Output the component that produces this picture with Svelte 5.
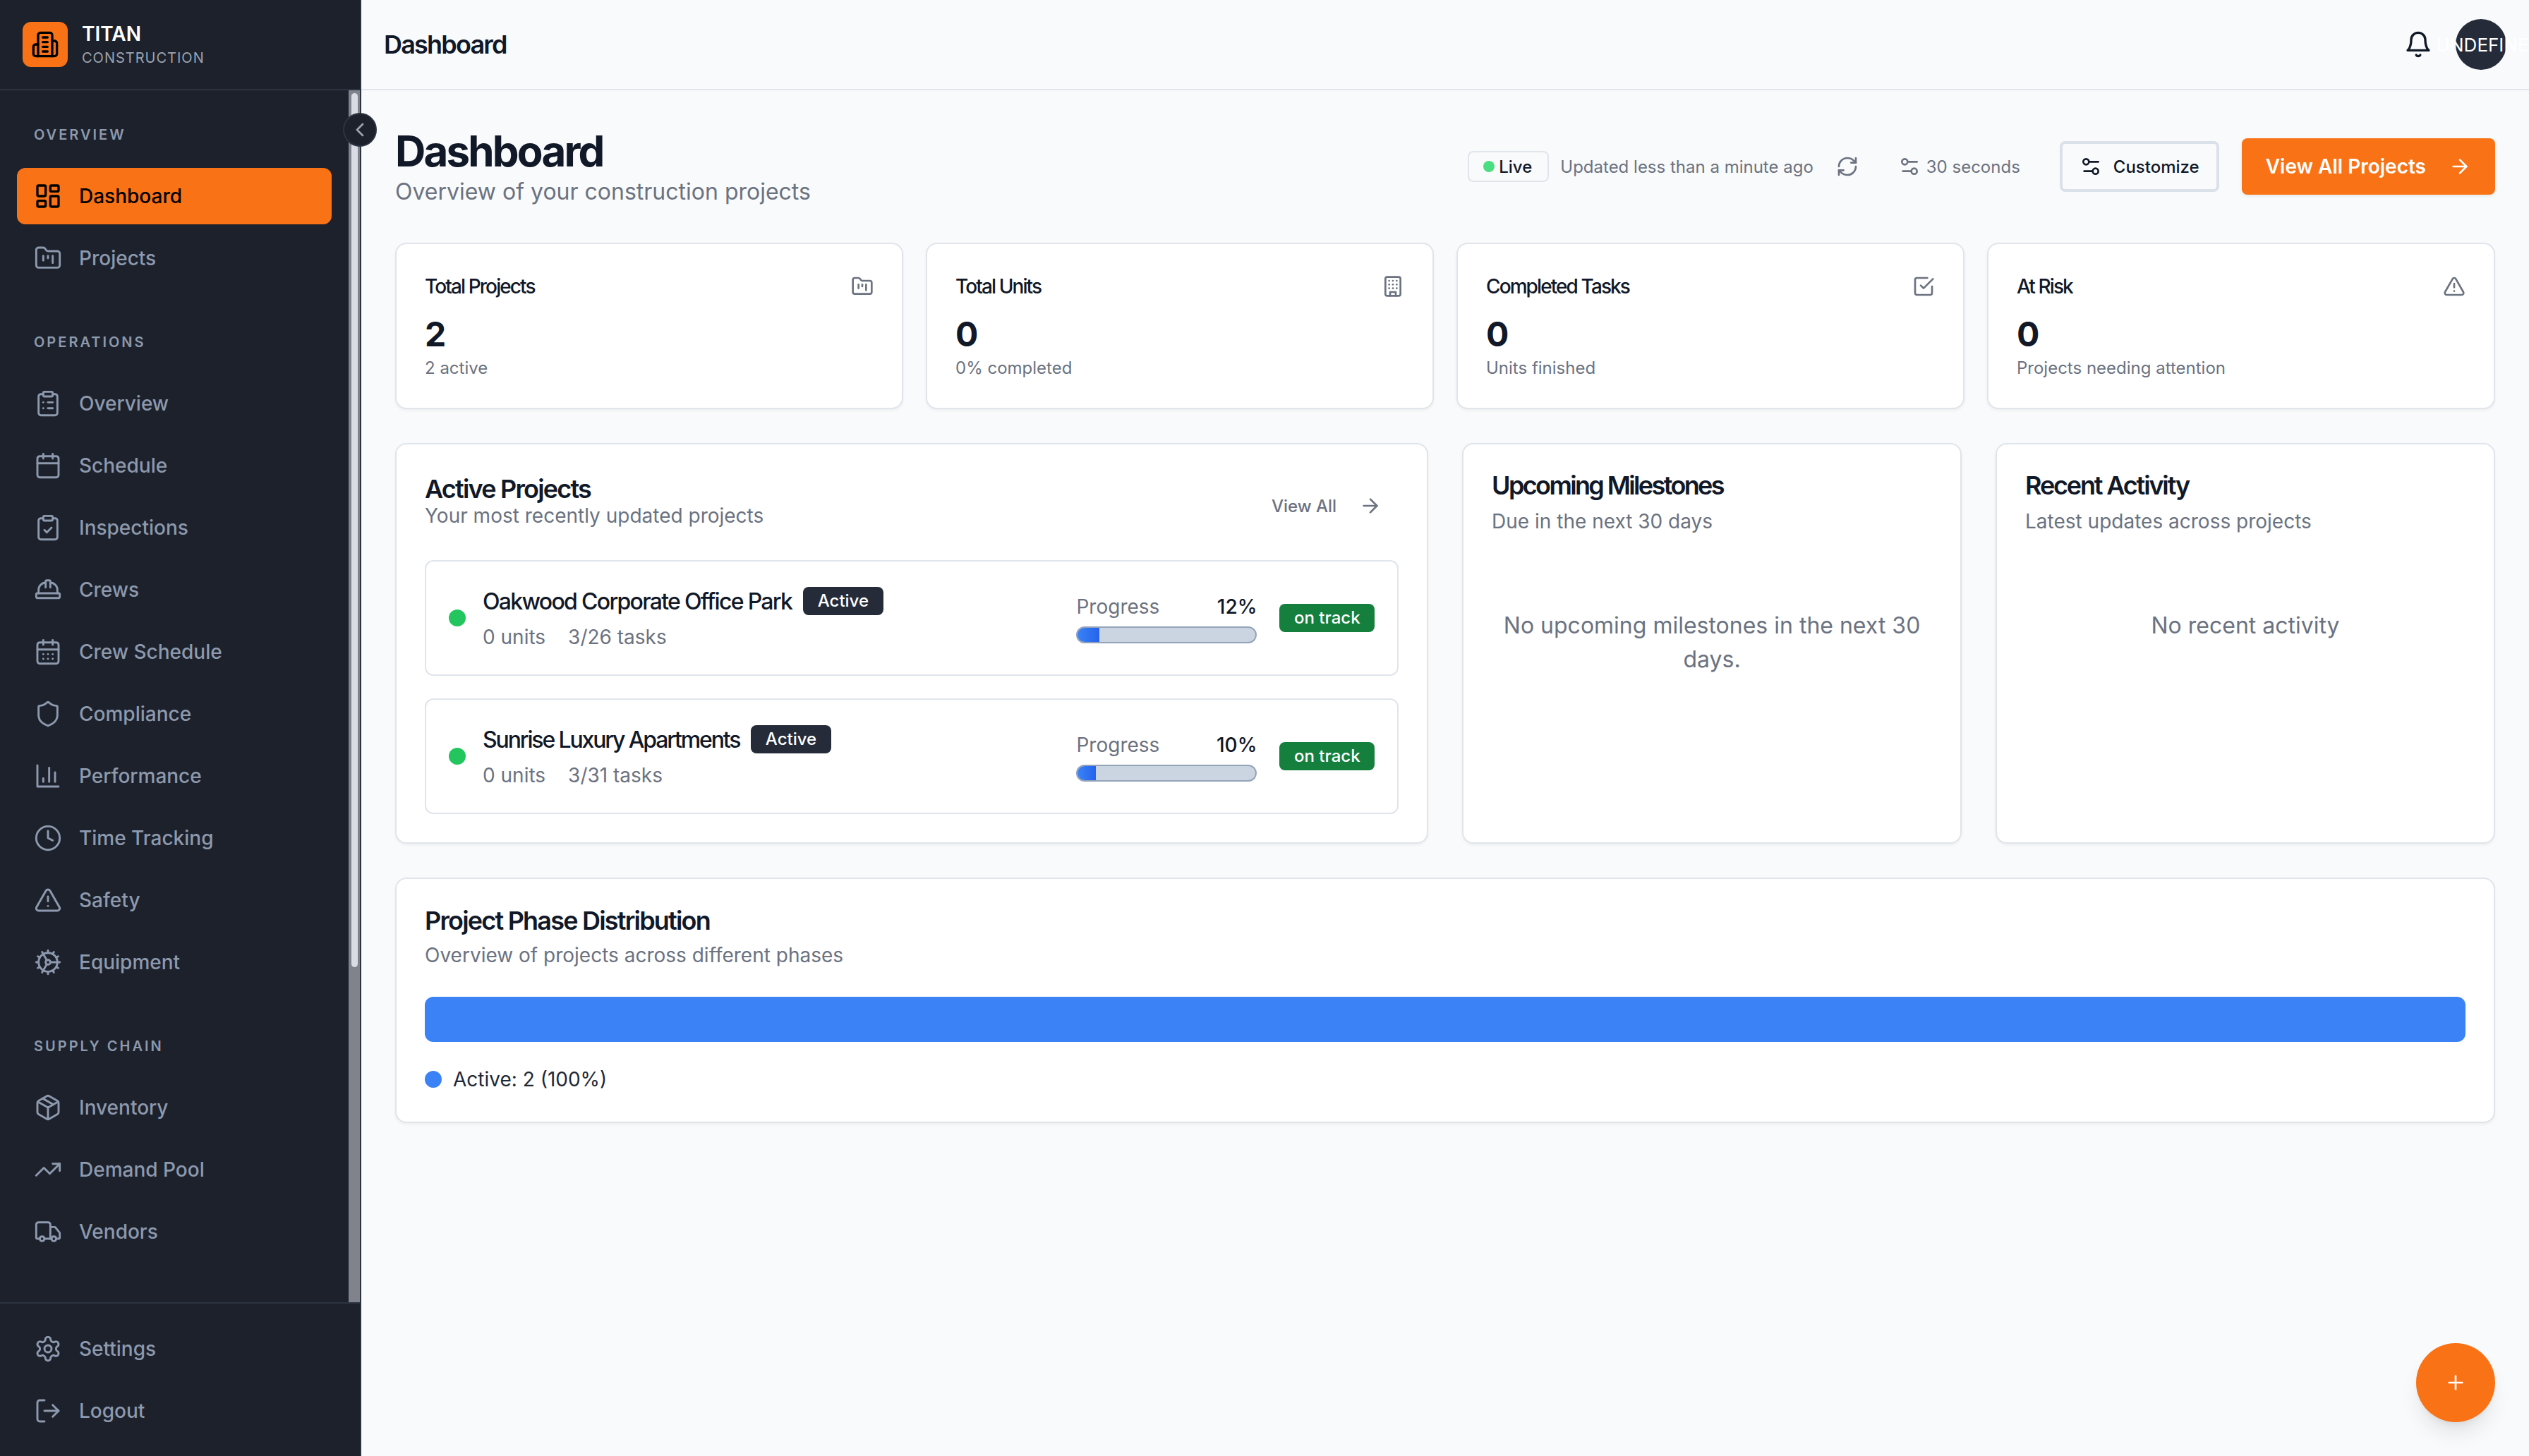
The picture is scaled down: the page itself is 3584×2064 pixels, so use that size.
<script>
  const paths = {
    building2: '<path d="M6 22V4a2 2 0 0 1 2-2h8a2 2 0 0 1 2 2v18Z"/><path d="M6 12H4a2 2 0 0 0-2 2v6a2 2 0 0 0 2 2h2"/><path d="M18 9h2a2 2 0 0 1 2 2v9a2 2 0 0 1-2 2h-2"/><path d="M10 6h4"/><path d="M10 10h4"/><path d="M10 14h4"/><path d="M10 18h4"/>',
    dashboard: '<rect width="7" height="9" x="3" y="3" rx="1"/><rect width="7" height="5" x="14" y="3" rx="1"/><rect width="7" height="9" x="14" y="12" rx="1"/><rect width="7" height="5" x="3" y="16" rx="1"/>',
    folder: '<path d="M4 20h16a2 2 0 0 0 2-2V8a2 2 0 0 0-2-2h-7.93a2 2 0 0 1-1.66-.9l-.82-1.2A2 2 0 0 0 7.93 3H4a2 2 0 0 0-2 2v13c0 1.1.9 2 2 2Z"/><path d="M8 10v4"/><path d="M12 10v2"/><path d="M16 10v6"/>',
    clipboardList: '<rect width="8" height="4" x="8" y="2" rx="1" ry="1"/><path d="M16 4h2a2 2 0 0 1 2 2v14a2 2 0 0 1-2 2H6a2 2 0 0 1-2-2V6a2 2 0 0 1 2-2h2"/><path d="M12 11h4"/><path d="M12 16h4"/><path d="M8 11h.01"/><path d="M8 16h.01"/>',
    calendar: '<path d="M8 2v4"/><path d="M16 2v4"/><rect width="18" height="18" x="3" y="4" rx="2"/><path d="M3 10h18"/>',
    clipboardCheck: '<rect width="8" height="4" x="8" y="2" rx="1" ry="1"/><path d="M16 4h2a2 2 0 0 1 2 2v14a2 2 0 0 1-2 2H6a2 2 0 0 1-2-2V6a2 2 0 0 1 2-2h2"/><path d="m9 14 2 2 4-4"/>',
    hardHat: '<path d="M2 18a1 1 0 0 0 1 1h18a1 1 0 0 0 1-1v-2a1 1 0 0 0-1-1H3a1 1 0 0 0-1 1v2z"/><path d="M10 10V5a1 1 0 0 1 1-1h2a1 1 0 0 1 1 1v5"/><path d="M4 15v-3a6 6 0 0 1 6-6"/><path d="M14 6a6 6 0 0 1 6 6v3"/>',
    calendarDays: '<path d="M8 2v4"/><path d="M16 2v4"/><rect width="18" height="18" x="3" y="4" rx="2"/><path d="M3 10h18"/><path d="M8 14h.01"/><path d="M12 14h.01"/><path d="M16 14h.01"/><path d="M8 18h.01"/><path d="M12 18h.01"/><path d="M16 18h.01"/>',
    shield: '<path d="M20 13c0 5-3.5 7.5-7.66 8.95a1 1 0 0 1-.67-.01C7.5 20.5 4 18 4 13V6a1 1 0 0 1 1-1c2 0 4.5-1.2 6.24-2.72a1.17 1.17 0 0 1 1.52 0C14.51 3.81 17 5 19 5a1 1 0 0 1 1 1z"/>',
    chart: '<path d="M3 3v18h18"/><path d="M18 17V9"/><path d="M13 17V5"/><path d="M8 17v-3"/>',
    clock: '<circle cx="12" cy="12" r="10"/><polyline points="12 6 12 12 16 14"/>',
    alert: '<path d="m21.73 18-8-14a2 2 0 0 0-3.48 0l-8 14A2 2 0 0 0 4 21h16a2 2 0 0 0 1.73-3"/><path d="M12 9v4"/><path d="M12 17h.01"/>',
    cog: '<path d="M12 20a8 8 0 1 0 0-16 8 8 0 0 0 0 16Z"/><path d="M12 14a2 2 0 1 0 0-4 2 2 0 0 0 0 4Z"/><path d="M12 2v2"/><path d="M12 22v-2"/><path d="m17 20.66-1-1.73"/><path d="M11 10.27 7 3.34"/><path d="m20.66 17-1.73-1"/><path d="m3.34 7 1.73 1"/><path d="M14 12h8"/><path d="M2 12h2"/><path d="m20.66 7-1.73 1"/><path d="m3.34 17 1.73-1"/><path d="m17 3.34-1 1.73"/><path d="m11 13.73-4 6.93"/>',
    package: '<path d="m7.5 4.27 9 5.15"/><path d="M21 8a2 2 0 0 0-1-1.73l-7-4a2 2 0 0 0-2 0l-7 4A2 2 0 0 0 3 8v8a2 2 0 0 0 1 1.73l7 4a2 2 0 0 0 2 0l7-4A2 2 0 0 0 21 16Z"/><path d="m3.3 7 8.7 5 8.7-5"/><path d="M12 22V12"/>',
    trending: '<polyline points="22 7 13.5 15.5 8.5 10.5 2 17"/><polyline points="16 7 22 7 22 13"/>',
    truck: '<path d="M14 18V6a2 2 0 0 0-2-2H4a2 2 0 0 0-2 2v11a1 1 0 0 0 1 1h2"/><path d="M15 18H9"/><path d="M19 18h2a1 1 0 0 0 1-1v-3.65a1 1 0 0 0-.22-.624l-3.48-4.35A1 1 0 0 0 17.52 8H14"/><circle cx="17" cy="18" r="2"/><circle cx="7" cy="18" r="2"/>',
    settings: '<path d="M12.22 2h-.44a2 2 0 0 0-2 2v.18a2 2 0 0 1-1 1.73l-.43.25a2 2 0 0 1-2 0l-.15-.08a2 2 0 0 0-2.73.73l-.22.38a2 2 0 0 0 .73 2.73l.15.1a2 2 0 0 1 1 1.72v.51a2 2 0 0 1-1 1.74l-.15.09a2 2 0 0 0-.73 2.73l.22.38a2 2 0 0 0 2.73.73l.15-.08a2 2 0 0 1 2 0l.43.25a2 2 0 0 1 1 1.73V20a2 2 0 0 0 2 2h.44a2 2 0 0 0 2-2v-.18a2 2 0 0 1 1-1.73l.43-.25a2 2 0 0 1 2 0l.15.08a2 2 0 0 0 2.73-.73l.22-.39a2 2 0 0 0-.73-2.73l-.15-.08a2 2 0 0 1-1-1.74v-.5a2 2 0 0 1 1-1.74l.15-.09a2 2 0 0 0 .73-2.73l-.22-.38a2 2 0 0 0-2.73-.73l-.15.08a2 2 0 0 1-2 0l-.43-.25a2 2 0 0 1-1-1.73V4a2 2 0 0 0-2-2z"/><circle cx="12" cy="12" r="3"/>',
    logout: '<path d="M9 21H5a2 2 0 0 1-2-2V5a2 2 0 0 1 2-2h4"/><polyline points="16 17 21 12 16 7"/><line x1="21" x2="9" y1="12" y2="12"/>',
    bell: '<path d="M6 8a6 6 0 0 1 12 0c0 7 3 9 3 9H3s3-2 3-9"/><path d="M10.3 21a1.94 1.94 0 0 0 3.4 0"/>',
    refresh: '<path d="M3 12a9 9 0 0 1 9-9 9.75 9.75 0 0 1 6.74 2.74L21 8"/><path d="M21 3v5h-5"/><path d="M21 12a9 9 0 0 1-9 9 9.75 9.75 0 0 1-6.74-2.74L3 16"/><path d="M8 16H3v5"/>',
    sliders: '<path d="M20 7h-9"/><path d="M14 17H5"/><circle cx="17" cy="17" r="3"/><circle cx="7" cy="7" r="3"/>',
    arrow: '<path d="M5 12h14"/><path d="m12 5 7 7-7 7"/>',
    chevron: '<path d="m15 18-6-6 6-6"/>',
    plus: '<path d="M5 12h14"/><path d="M12 5v14"/>',
    building: '<rect width="16" height="20" x="4" y="2" rx="2" ry="2"/><path d="M9 22v-4h6v4"/><path d="M8 6h.01"/><path d="M16 6h.01"/><path d="M12 6h.01"/><path d="M12 10h.01"/><path d="M12 14h.01"/><path d="M16 10h.01"/><path d="M16 14h.01"/><path d="M8 10h.01"/><path d="M8 14h.01"/>',
    check: '<polyline points="9 11 12 14 22 4"/><path d="M21 12v7a2 2 0 0 1-2 2H5a2 2 0 0 1-2-2V5a2 2 0 0 1 2-2h11"/>'
  };

  const sections = [
    { label: 'Overview', items: [['Dashboard', 'dashboard', true], ['Projects', 'folder']] },
    {
      label: 'Operations',
      items: [
        ['Overview', 'clipboardList'], ['Schedule', 'calendar'], ['Inspections', 'clipboardCheck'],
        ['Crews', 'hardHat'], ['Crew Schedule', 'calendarDays'], ['Compliance', 'shield'],
        ['Performance', 'chart'], ['Time Tracking', 'clock'], ['Safety', 'alert'], ['Equipment', 'cog']
      ]
    },
    { label: 'Supply Chain', items: [['Inventory', 'package'], ['Demand Pool', 'trending'], ['Vendors', 'truck']] }
  ];

  const stats = [
    { title: 'Total Projects', value: 2, note: '2 active', icon: 'folder' },
    { title: 'Total Units', value: 0, note: '0% completed', icon: 'building' },
    { title: 'Completed Tasks', value: 0, note: 'Units finished', icon: 'check' },
    { title: 'At Risk', value: 0, note: 'Projects needing attention', icon: 'alert' }
  ];

  const projects = [
    { name: 'Oakwood Corporate Office Park', tasks: '3/26 tasks', pct: 12, tracking: -0.053 },
    { name: 'Sunrise Luxury Apartments', tasks: '3/31 tasks', pct: 10, tracking: -0.067 }
  ];
</script>

{#snippet icon(name, size = 40)}
  <svg class="icon" width={size} height={size} viewBox="0 0 24 24" fill="none" stroke="currentColor" stroke-linecap="round" stroke-linejoin="round">{@html paths[name]}</svg>
{/snippet}

<div class="shell">
  <aside class="sidebar">
    <div class="brand">
      <div class="logo">{@render icon('building2')}</div>
      <div class="brand-text">
        <div class="brand-name">TITAN</div>
        <div class="brand-sub">CONSTRUCTION</div>
      </div>
    </div>
    <div class="nav-wrap">
      <nav class="nav">
        {#each sections as section}
          <div class="section">
            <div class="section-label">{section.label}</div>
            <div class="items">
              {#each section.items as [label, ic, active]}
                <a class="item" class:active href="#top">{@render icon(ic)}<span>{label}</span></a>
              {/each}
            </div>
          </div>
        {/each}
      </nav>
      <div class="track"><div class="thumb"></div></div>
    </div>
    <div class="sidebar-foot">
      <a class="item" href="#top">{@render icon('settings')}<span>Settings</span></a>
      <a class="item" href="#top">{@render icon('logout')}<span>Logout</span></a>
    </div>
    <button class="collapse" aria-label="Collapse">{@render icon('chevron', 32)}</button>
  </aside>

  <div class="main">
    <header class="topbar">
      <div class="topbar-title">Dashboard</div>
      <div class="topbar-right">
        <span class="bell">{@render icon('bell')}</span>
        <div class="avatar"><span>UNDEFINED</span></div>
      </div>
    </header>

    <main class="content">
      <div class="page-head">
        <div>
          <h1>Dashboard</h1>
          <p>Overview of your construction projects</p>
        </div>
        <div class="actions">
          <span class="live"><i></i>Live</span>
          <span class="muted updated">Updated less than a minute ago</span>
          <span class="muted refresh">{@render icon('refresh', 32)}</span>
          <span class="muted interval">{@render icon('sliders', 32)}30 seconds</span>
          <button class="customize">{@render icon('sliders', 32)}Customize</button>
          <button class="primary">View All Projects{@render icon('arrow', 32)}</button>
        </div>
      </div>

      <div class="stats">
        {#each stats as s}
          <div class="card stat">
            <div class="stat-top"><span class="stat-title">{s.title}</span><span class="stat-icon">{@render icon(s.icon, 32)}</span></div>
            <div class="stat-value">{s.value}</div>
            <div class="stat-note">{s.note}</div>
          </div>
        {/each}
      </div>

      <div class="row">
        <section class="card active-card">
          <div class="active-head">
            <div>
              <h2>Active Projects</h2>
              <p class="sub">Your most recently updated projects</p>
            </div>
            <span class="view-all">View All{@render icon('arrow', 32)}</span>
          </div>
          <div class="project-list">
            {#each projects as p}
              <div class="project">
                <i class="status-dot"></i>
                <div class="project-main">
                  <div class="project-name"><span style="letter-spacing: {p.tracking}em">{p.name}</span><b class="badge">Active</b></div>
                  <div class="project-meta"><span>0 units</span><span>{p.tasks}</span></div>
                </div>
                <div class="progress">
                  <div class="progress-top"><span>Progress</span><b>{p.pct}%</b></div>
                  <div class="bar"><div class="fill" style="width: {p.pct}%"></div></div>
                </div>
                <b class="track-badge">on track</b>
              </div>
            {/each}
          </div>
        </section>

        <section class="card side-card">
          <h2 class="milestones">Upcoming Milestones</h2>
          <p class="sub">Due in the next 30 days</p>
          <p class="empty">No upcoming milestones in the next 30 days.</p>
        </section>

        <section class="card side-card">
          <h2 class="recent">Recent Activity</h2>
          <p class="sub">Latest updates across projects</p>
          <p class="empty">No recent activity</p>
        </section>
      </div>

      <section class="card phase">
        <h2>Project Phase Distribution</h2>
        <p class="sub">Overview of projects across different phases</p>
        <div class="phase-bar"></div>
        <div class="legend"><i></i>Active: 2 (100%)</div>
      </section>
    </main>

    <button class="fab" aria-label="Add">{@render icon('plus', 32)}</button>
  </div>
</div>

<style>
  :global(body) {
    margin: 0;
    font-family: Inter, "Liberation Sans", sans-serif;
    background: #f9fafb;
  }

  h1, h2, p { margin: 0; }

  .icon {
    display: block;
    flex: none;
    stroke-width: 2;
  }

  .shell {
    display: flex;
    height: 2064px;
    overflow: hidden;
  }

  /* sidebar */
  .sidebar {
    position: relative;
    width: 512px;
    flex: none;
    box-sizing: border-box;
    display: flex;
    flex-direction: column;
    background: #1c212c;
    border-right: 2px solid #2d3340;
    color: #8d99ad;
    z-index: 2;
  }

  .brand {
    height: 128px;
    box-sizing: border-box;
    flex: none;
    display: flex;
    align-items: center;
    gap: 20px;
    padding: 0 32px 1px;
    border-bottom: 2px solid #2d3340;
  }

  .logo {
    width: 64px;
    height: 64px;
    display: flex;
    align-items: center;
    justify-content: center;
    border-radius: 12px;
    background: #f97316;
    color: #000;
  }

  .brand-name {
    color: #fff;
    font-size: 28px;
    line-height: 36px;
    font-weight: 600;
  }

  .brand-sub {
    color: #9ca3af;
    font-size: 20px;
    line-height: 28px;
    letter-spacing: 0.05em;
    margin-top: 2px;
  }

  .nav-wrap {
    flex: 1;
    min-height: 0;
    display: flex;
  }

  .nav {
    flex: 1;
    padding: 49px 24px 0;
    min-width: 0;
  }

  .section + .section { margin-top: 65px; }

  .section-label {
    padding-left: 24px;
    font-size: 20px;
    line-height: 28px;
    font-weight: 600;
    letter-spacing: 0.15em;
    text-transform: uppercase;
    margin-bottom: 33px;
  }

  .items, .sidebar-foot {
    display: flex;
    flex-direction: column;
    gap: 8px;
  }

  .item {
    height: 80px;
    display: flex;
    align-items: center;
    gap: 24px;
    padding-left: 24px;
    border-radius: 12px;
    font-size: 28px;
    font-weight: 500;
    color: inherit;
    text-decoration: none;
  }

  .item .icon { stroke-width: 1.75; }

  .item.active {
    background: #f97316;
    color: #000;
  }

  .item.active .icon { stroke-width: 2; }

  .track {
    width: 16px;
    flex: none;
    background: #80838b;
  }

  .thumb {
    width: 9px;
    height: 1239px;
    margin: 4px 0 0 4px;
    border-radius: 5px;
    background: #d9dce5;
  }

  .sidebar-foot {
    flex: none;
    border-top: 2px solid #2d3340;
    padding: 24px;
  }

  .collapse {
    position: absolute;
    top: 160px;
    right: -24px;
    width: 48px;
    height: 48px;
    padding: 0;
    display: flex;
    align-items: center;
    justify-content: center;
    border-radius: 50%;
    border: 2px solid #2d3340;
    background: #1c212c;
    color: #9ca3af;
  }

  /* main column */
  .main {
    position: relative;
    flex: 1;
    min-width: 0;
    background: #f9fafb;
    color: #111827;
  }

  .topbar {
    height: 128px;
    box-sizing: border-box;
    display: flex;
    align-items: center;
    justify-content: space-between;
    padding: 0 32px;
    border-bottom: 2px solid #e0e5eb;
  }

  .topbar-title {
    font-size: 36px;
    font-weight: 600;
    letter-spacing: -0.05em;
  }

  .topbar-right {
    display: flex;
    align-items: center;
    gap: 33px;
  }

  .avatar {
    width: 72px;
    height: 72px;
    display: flex;
    align-items: center;
    justify-content: center;
    border-radius: 50%;
    background: #252b38;
    color: #fff;
    font-size: 26px;
    white-space: nowrap;
  }

  .avatar span { padding-left: 23px; }

  .content { padding: 48px; }

  .page-head {
    display: flex;
    align-items: center;
    justify-content: space-between;
    height: 120px;
    margin-bottom: 48px;
  }

  h1 {
    font-size: 60px;
    line-height: 72px;
    font-weight: 700;
    letter-spacing: -0.047em;
    padding-top: 1px;
  }

  .page-head p {
    font-size: 32px;
    line-height: 46px;
    margin-top: -1px;
    color: #6b7280;
  }

  .actions {
    display: flex;
    align-items: center;
    font-size: 24px;
  }

  .muted { color: #6b7280; }

  .live {
    display: flex;
    align-items: center;
    gap: 6px;
    height: 44px;
    box-sizing: border-box;
    padding: 0 22px 0 20px;
    border: 2px solid #e0e5eb;
    border-radius: 8px;
    font-weight: 500;
  }

  .live i {
    width: 16px;
    height: 16px;
    border-radius: 50%;
    background: #4ade80;
  }

  .updated { margin-left: 16px; }
  .refresh { margin-left: 32px; }

  .interval {
    display: flex;
    align-items: center;
    gap: 8px;
    margin-left: 56px;
  }

  .customize, .primary {
    display: flex;
    align-items: center;
    font-family: inherit;
    border-radius: 8px;
    padding: 0;
  }

  .customize {
    height: 72px;
    margin-left: 56px;
    gap: 16px;
    padding: 0 24px;
    border: 4px solid #dbe1e8;
    background: #f9fafb;
    font-size: 24px;
    font-weight: 500;
    color: #111827;
  }

  .primary {
    height: 80px;
    margin-left: 32px;
    gap: 32px;
    padding: 0 34px;
    border: 0;
    background: #f97316;
    color: #fff;
    font-size: 28px;
    font-weight: 600;
    box-shadow: 0 2px 4px rgb(0 0 0 / 0.08);
  }

  .card {
    box-sizing: border-box;
    background: #fff;
    border: 2px solid #e0e5eb;
    border-radius: 16px;
    box-shadow: 0 2px 4px rgb(0 0 0 / 0.05);
  }

  .stats {
    display: grid;
    grid-template-columns: repeat(4, minmax(0, 1fr));
    gap: 32px;
    margin-bottom: 48px;
  }

  .stat {
    height: 236px;
    padding: 44px 40px 0;
  }

  .stat-top {
    display: flex;
    justify-content: space-between;
    align-items: center;
    height: 32px;
    color: #6b7280;
  }

  .stat-title {
    font-size: 28px;
    font-weight: 500;
    letter-spacing: -0.068em;
    color: #111827;
  }

  .stat-value {
    margin-top: 20px;
    font-size: 48px;
    line-height: 64px;
    font-weight: 700;
  }

  .stat-note {
    font-size: 24px;
    line-height: 32px;
    color: #6b7280;
  }

  .row {
    display: grid;
    grid-template-columns: minmax(0, 2.068fr) minmax(0, 1fr) minmax(0, 1fr);
    gap: 48px;
    height: 568px;
    margin-bottom: 48px;
  }

  h2 {
    font-size: 36px;
    line-height: 48px;
    font-weight: 600;
    letter-spacing: -0.05em;
  }

  h2.milestones { letter-spacing: -0.073em; }
  h2.recent { letter-spacing: -0.06em; }

  .sub {
    font-size: 28px;
    line-height: 40px;
    color: #6b7280;
  }

  .active-card { padding: 39px 40px 40px; }

  .active-card .sub {
    line-height: 34px;
    margin-top: -3px;
  }

  .active-head {
    display: flex;
    justify-content: space-between;
    align-items: flex-start;
    margin-bottom: 46px;
  }

  .view-all {
    display: flex;
    align-items: center;
    gap: 32px;
    margin-top: 32px;
    padding-right: 24px;
    font-size: 24px;
    font-weight: 500;
    color: #6b7280;
  }

  .project-list {
    display: flex;
    flex-direction: column;
    gap: 32px;
  }

  .project {
    height: 164px;
    box-sizing: border-box;
    display: flex;
    align-items: center;
    padding: 0 32px;
    border: 2px solid #e0e5eb;
    border-radius: 12px;
  }

  .status-dot {
    width: 24px;
    height: 24px;
    flex: none;
    border-radius: 50%;
    background: #22c55e;
    margin-right: 24px;
  }

  .project-main { flex: 1; }

  .project-name {
    display: flex;
    align-items: center;
    gap: 16px;
    font-size: 32px;
    font-weight: 500;
  }

  .badge, .track-badge {
    font-size: 24px;
    font-weight: 500;
    line-height: 40px;
    padding: 0 20.5px;
    border-radius: 8px;
    color: #fff;
  }

  .badge { background: #252b38; }

  .track-badge {
    background: #15803d;
    margin-left: 32px;
  }

  .project-meta {
    display: flex;
    gap: 32px;
    margin-top: 14px;
    font-size: 28px;
    color: #6b7280;
  }

  .progress { width: 256px; }

  .progress-top {
    display: flex;
    justify-content: space-between;
    font-size: 28px;
    line-height: 40px;
    color: #6b7280;
    margin-bottom: 8px;
  }

  .progress-top b {
    font-weight: 500;
    color: #111827;
  }

  .bar {
    height: 24px;
    box-sizing: border-box;
    border: 2px solid #94a3b8;
    border-radius: 12px;
    background: #cbd5e1;
    overflow: hidden;
  }

  .fill {
    height: 100%;
    background: linear-gradient(to right, #3b82f6, #2563eb);
  }

  .side-card {
    padding: 34px 40px 40px;
    display: flex;
    flex-direction: column;
  }

  .side-card .sub { margin-top: 7px; }

  .empty {
    margin-top: 104px;
    font-size: 32px;
    line-height: 48px;
    text-align: center;
    color: #6b7280;
  }

  .phase {
    height: 348px;
    padding: 35px 40px 0;
  }

  .phase .sub { margin-top: 5px; }

  .phase-bar {
    height: 64px;
    margin-top: 39px;
    border-radius: 12px;
    background: #3b82f6;
  }

  .legend {
    display: flex;
    align-items: center;
    gap: 16px;
    margin-top: 37px;
    font-size: 28px;
    line-height: 32px;
    color: #1f2937;
  }

  .legend i {
    width: 24px;
    height: 24px;
    border-radius: 50%;
    background: #3b82f6;
  }

  .fab {
    position: absolute;
    right: 48px;
    bottom: 48px;
    width: 112px;
    height: 112px;
    padding: 0;
    display: flex;
    align-items: center;
    justify-content: center;
    border: 0;
    border-radius: 50%;
    background: #f97316;
    color: #fff;
    box-shadow: 0 20px 30px -6px rgb(0 0 0 / 0.1), 0 8px 12px -8px rgb(0 0 0 / 0.1);
  }
</style>
